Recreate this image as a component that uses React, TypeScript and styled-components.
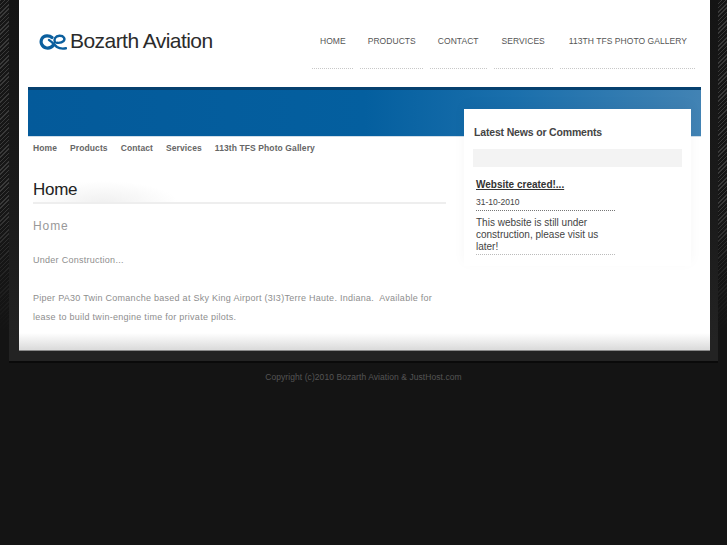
import styled, { createGlobalStyle } from 'styled-components'

const GlobalStyle = createGlobalStyle`
  html, body {
    margin: 0;
    padding: 0;
    background: #141414;
  }
  body {
    font-family: "Liberation Sans", Arial, sans-serif;
  }
`

const Page = styled.div`
  width: 727px;
  height: 545px;
  overflow: hidden;
  background:
    linear-gradient(180deg, transparent 0, transparent 200px, #141414 330px),
    repeating-linear-gradient(135deg, #3a3a3a 0, #3a3a3a 1px, #161616 1px, #161616 3px);
`

const Frame = styled.div`
  width: 691px;
  margin-left: 9px;
  padding: 0 8px 10px 10px;
  background: linear-gradient(180deg, #141414 0, #1b1b1b 220px, #232323 340px);
  box-shadow: 0 2px 0 #0a0a0a;
`

const Sheet = styled.div`
  height: 351px;
  box-sizing: border-box;
  padding: 0 9px;
  background: linear-gradient(180deg, #fff 0, #fff 333px, #dcdcdc 349px);
  border-bottom: 1px solid #8a8a8a;
`

const Header = styled.header`
  height: 87px;
  display: flex;
  justify-content: space-between;
`

const Logo = styled.div`
  display: flex;
  align-items: center;
  gap: 3px;
  height: 81px;
  padding-left: 11px;
`

const LogoMark = styled.svg`
  width: 28px;
  height: 16px;
  margin-top: 3px;
`

const LogoText = styled.span`
  font-size: 21px;
  letter-spacing: -0.55px;
  color: #2b2b2b;
`

const TopNav = styled.nav`
  display: flex;
  gap: 7px;
  margin: 33px 6px 0 0;
  align-self: flex-start;
`

const TopNavItem = styled.a<{ $left?: number; $right?: number }>`
  display: block;
  padding: 0 ${(p) => p.$right ?? 8}px 18px ${(p) => p.$left ?? 8}px;
  font-size: 8.5px;
  line-height: 17px;
  letter-spacing: 0.05px;
  text-transform: uppercase;
  color: #555;
  border-bottom: 1px dotted #c8c8c8;
`

const Banner = styled.div`
  height: 46px;
  border-top: 3px solid #06406f;
  background: linear-gradient(90deg, #045a9a 0, #045f9f 50%, #1a6fac 72%, #4283b4 100%);
  box-shadow: 0 1px 0 #cfdde8;
`

const Columns = styled.div`
  display: flex;
  align-items: flex-start;
  padding-left: 5px;
`

const Main = styled.main`
  width: 413px;
`

const SubNav = styled.nav`
  display: flex;
  gap: 13px;
  height: 24px;
  align-items: center;
`

const SubNavItem = styled.a`
  font-size: 8.5px;
  font-weight: bold;
  letter-spacing: 0.1px;
  color: #666;
`

const PageTitle = styled.h1`
  margin: 17px 0 0;
  height: 25px;
  font-size: 17px;
  line-height: 26px;
  font-weight: normal;
  letter-spacing: -0.3px;
  color: #222;
  border-bottom: 2px solid #eee;
  background: radial-gradient(ellipse 75px 22px at 70px 26px, #f0f0f0 0, #fff 100%);
`

const SectionTitle = styled.h2`
  margin: 14px 0 0;
  font-size: 12px;
  line-height: 16px;
  font-weight: normal;
  letter-spacing: 0.9px;
  color: #999;
`

const Text = styled.p<{ $gap: number }>`
  margin: ${(p) => p.$gap}px 0 0;
  font-size: 9px;
  line-height: 19px;
  letter-spacing: 0.27px;
  color: #8e8e8e;
`

const Sidebar = styled.aside`
  width: 227px;
  height: 157px;
  box-sizing: border-box;
  margin: -27px 0 0 18px;
  padding: 16px 9px 0;
  background: #fff;
  position: relative;
  box-shadow: 0 -4px 12px rgba(0, 0, 0, 0.04);
`

const SidebarTitle = styled.h3`
  margin: 0 0 0 1px;
  font-size: 10.5px;
  line-height: 14px;
  letter-spacing: -0.17px;
  color: #444;
`

const SearchBar = styled.div`
  height: 18px;
  margin-top: 10px;
  background: #f3f3f3;
`

const NewsItem = styled.article`
  width: 139px;
  margin: 11px 0 0 3px;
`

const NewsTitle = styled.a`
  display: block;
  font-size: 10px;
  line-height: 13px;
  font-weight: bold;
  color: #333;
  text-decoration: underline;
`

const NewsDate = styled.div`
  margin-top: 6px;
  padding-bottom: 2px;
  font-size: 8.5px;
  line-height: 11px;
  color: #444;
  border-bottom: 1px dotted #777;
`

const NewsBody = styled.p`
  margin: 6px 0 0;
  font-size: 10px;
  line-height: 12.2px;
  color: #444;
  border-bottom: 1px dotted #bbb;
`

const Copyright = styled.footer`
  margin-top: 10px;
  text-align: center;
  font-size: 8.5px;
  line-height: 12px;
  letter-spacing: 0.07px;
  color: #555;
`

export default function App() {
  return (
    <Page>
      <GlobalStyle />
      <Frame>
        <Sheet>
          <Header>
            <Logo>
              <LogoMark viewBox="0 0 28 16" fill="none" stroke="#0b5f9e" strokeLinecap="round">
                <path d="M13 3.5C10.5 1.3 5 1.2 3 4.5C1 8 2.5 13 7.5 14C10.5 14.5 13 13 14.5 11" strokeWidth="3.2" />
                <path d="M10 6C13 7.5 15.5 11 18 13C20.5 14.7 24 14.8 27 14.3" strokeWidth="2.4" />
                <path d="M16 8.5C14.5 5 16.5 2 20.5 1.8C25 1.7 26.5 5 24.5 7.2C23 8.7 20.5 9 18 8.8" strokeWidth="2.4" />
              </LogoMark>
              <LogoText>Bozarth Aviation</LogoText>
            </Logo>
            <TopNav>
              <TopNavItem $right={7}>Home</TopNavItem>
              <TopNavItem $right={7}>Products</TopNavItem>
              <TopNavItem>Contact</TopNavItem>
              <TopNavItem>Services</TopNavItem>
              <TopNavItem $left={9}>113th TFS Photo Gallery</TopNavItem>
            </TopNav>
          </Header>
          <Banner />
          <Columns>
            <Main>
              <SubNav>
                <SubNavItem>Home</SubNavItem>
                <SubNavItem>Products</SubNavItem>
                <SubNavItem>Contact</SubNavItem>
                <SubNavItem>Services</SubNavItem>
                <SubNavItem>113th TFS Photo Gallery</SubNavItem>
              </SubNav>
              <PageTitle>Home</PageTitle>
              <SectionTitle>Home</SectionTitle>
              <Text $gap={17}>Under Construction...</Text>
              <Text $gap={19}>
                Piper PA30 Twin Comanche based at Sky King Airport (3I3)Terre Haute. Indiana.&nbsp; Available for lease to build twin-engine time for private pilots.
              </Text>
            </Main>
            <Sidebar>
              <SidebarTitle>Latest News or Comments</SidebarTitle>
              <SearchBar />
              <NewsItem>
                <NewsTitle>Website created!...</NewsTitle>
                <NewsDate>31-10-2010</NewsDate>
                <NewsBody>This website is still under construction, please visit us later!</NewsBody>
              </NewsItem>
            </Sidebar>
          </Columns>
        </Sheet>
      </Frame>
      <Copyright>Copyright (c)2010 Bozarth Aviation &amp; JustHost.com</Copyright>
    </Page>
  )
}
